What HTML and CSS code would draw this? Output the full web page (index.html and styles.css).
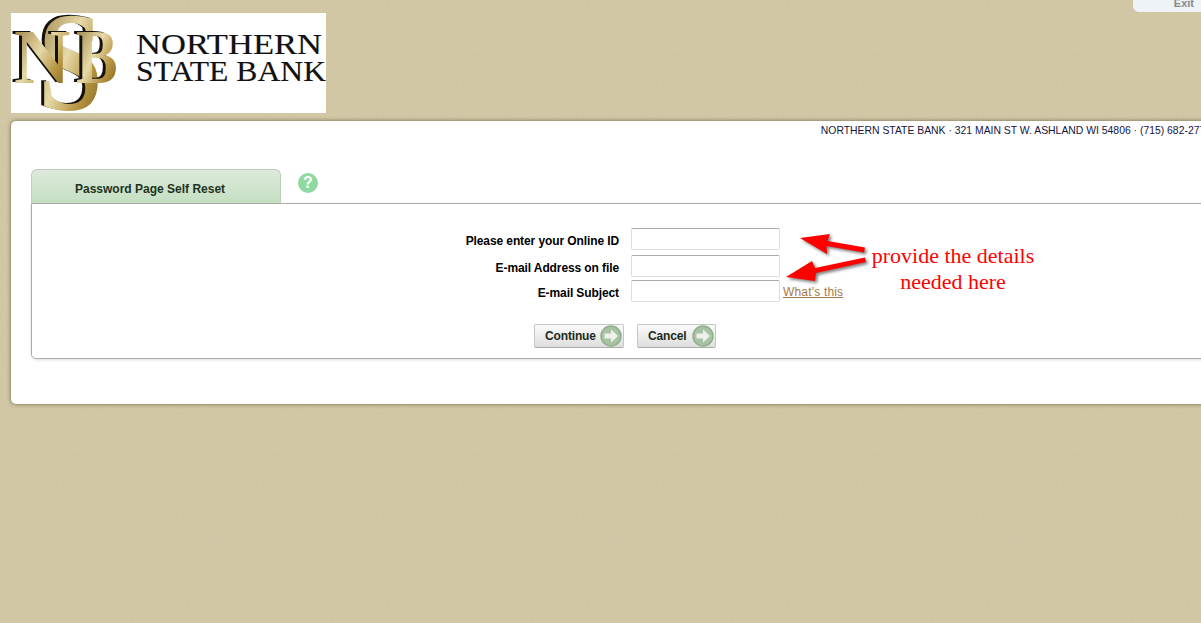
FILE: index.html
```html
<!DOCTYPE html>
<html lang="en">
<head>
    <meta charset="UTF-8">
    <title>Password Page Self Reset</title>
    <link rel="stylesheet" href="styles.css">
</head>
<body>

<!-- Header -->
<div class="header">
    <svg class="logo" width="315" height="100" viewBox="0 0 315 100">
        <defs>
            <linearGradient id="gold" x1="0" y1="0" x2="1" y2="1">
                <stop offset="0" stop-color="#8a6d2c"/>
                <stop offset="0.45" stop-color="#e6d9a8"/>
                <stop offset="0.7" stop-color="#b4923f"/>
                <stop offset="1" stop-color="#6e5418"/>
            </linearGradient>
        </defs>
        <rect width="315" height="100" fill="#fff"/>
        <g class="mono">
            <text class="mono-back" transform="translate(24,96) scale(0.82,1)" font-size="142">S</text>
            <text class="mono-gold" transform="translate(27,97) scale(0.82,1)" font-size="142">S</text>
            <text class="mono-back" transform="translate(0,69)" font-size="78">N</text>
            <text class="mono-gold" transform="translate(3,70)" font-size="78">N</text>
            <text class="mono-back" transform="translate(62,69) scale(0.8,1)" font-size="78">B</text>
            <text class="mono-gold" transform="translate(65,70) scale(0.8,1)" font-size="78">B</text>
        </g>
        <text class="wordmark" x="125" y="41" textLength="186" lengthAdjust="spacingAndGlyphs">NORTHERN</text>
        <text class="wordmark" x="125" y="68" textLength="190" lengthAdjust="spacingAndGlyphs">STATE BANK</text>
    </svg>
    <div class="exit-tab">Exit</div>
</div>

<!-- Main card -->
<div class="card">
    <p class="address">NORTHERN STATE BANK · 321 MAIN ST W. ASHLAND WI 54806 · (715) 682-2772</p>

    <div class="tabs">
        <div class="tab">Password Page Self Reset</div>
        <div class="help">?</div>
    </div>

    <div class="panel">
        <form class="reset-form">
            <label class="row-first">Please enter your Online ID</label>
            <input class="row-first" type="text">
            <span class="row-first"></span>

            <label class="row-second">E-mail Address on file</label>
            <input class="row-second" type="text">
            <span class="row-second"></span>

            <label>E-mail Subject</label>
            <input type="text">
            <a class="whats-this" href="#">What's this</a>
        </form>

        <div class="buttons">
            <button type="button" class="btn btn-continue">Continue
                <svg class="go" width="22" height="22" viewBox="0 0 22 22">
                    <circle cx="11" cy="11" r="10" fill="#a8c3a4" stroke="#8fae8b" stroke-width="1.5"/>
                    <path d="M4.5 8.5h6.5V4.5L18 11l-7 6.500v-4H4.500z" fill="#eef2ea"/>
                </svg>
            </button>
            <button type="button" class="btn btn-cancel">Cancel
                <svg class="go" width="22" height="22" viewBox="0 0 22 22">
                    <circle cx="11" cy="11" r="10" fill="#a8c3a4" stroke="#8fae8b" stroke-width="1.5"/>
                    <path d="M4.5 8.5h6.500V4.500L18 11l-7 6.500v-4H4.500z" fill="#eef2ea"/>
                </svg>
            </button>
        </div>
    </div>
</div>

<!-- Red note drawn over the page -->
<svg class="arrows" width="90" height="60" viewBox="0 0 90 60">
    <path d="M15 9L45 5l-2.500 7L80 18.500 79 23.500 41.500 17 42 25z" fill="#f00"/>
    <path d="M1 48L27 32l3 7L80 28.500l1 4.500L31 44l-1 8z" fill="#f00"/>
</svg>
<div class="note">provide the details<br>needed here</div>

</body>
</html>
```

FILE: styles.css
```css
html, body {
    height: 100%;
}

body {
    margin: 0;
    overflow: hidden;
    position: relative;
    background-color: #d7ccaa;
    background-image: url("data:image/svg+xml,%3Csvg xmlns='http://www.w3.org/2000/svg' width='200' height='200'%3E%3Cfilter id='n'%3E%3CfeTurbulence type='fractalNoise' baseFrequency='0.8' numOctaves='2' stitchTiles='stitch'/%3E%3CfeColorMatrix values='0 0 0 0 0.45 0 0 0 0 0.4 0 0 0 0 0.25 0 0 0 0.3 0'/%3E%3C/filter%3E%3Crect width='200' height='200' filter='url(%23n)'/%3E%3C/svg%3E");
    font-family: "Liberation Sans", Arial, sans-serif;
    color: #000;
}

.header {
    display: flex;
    justify-content: space-between;
    align-items: flex-start;
    height: 121px;
}

.logo {
    display: block;
    margin: 13px 0 0 11px;
}

.mono text {
    font-family: "Liberation Serif", serif;
    font-weight: bold;
}

.mono-back {
    fill: #14110a;
}

.mono-gold {
    fill: url(#gold);
}

.wordmark {
    font-family: "Liberation Serif", serif;
    font-size: 29px;
    fill: #111;
    stroke: #111;
    stroke-width: 0.15px;
}

.exit-tab {
    width: 68px;
    height: 12px;
    box-sizing: border-box;
    line-height: 6px;
    padding-right: 7px;
    text-align: right;
    font-size: 11px;
    font-weight: bold;
    color: #888;
    background: #edf3f6;
    border-radius: 0 0 0 6px;
    overflow: hidden;
}

.card {
    width: 1228px;
    height: 283px;
    box-sizing: border-box;
    margin-left: 11px;
    padding: 0 0 0 20px;
    background: #fff;
    border-radius: 5px;
    box-shadow: 0 0 4px #6b6448;
}

.address {
    margin: 0 28px 0 -20px;
    padding-top: 4px;
    text-align: right;
    font-size: 10.400px;
    line-height: 12px;
    color: #14143c;
}

.tabs {
    display: flex;
    align-items: flex-start;
    margin-top: 32px;
}

.tab {
    width: 250px;
    height: 34px;
    box-sizing: border-box;
    padding: 12px 0 0 43px;
    font-size: 12px;
    font-weight: bold;
    line-height: 14px;
    color: #1d3320;
    background: linear-gradient(#dde9db, #c5dfc2);
    border: 1px solid #bccdb9;
    border-bottom: none;
    border-radius: 6px 6px 0 0;
}

.help {
    width: 20px;
    height: 20px;
    margin: 4px 0 0 17px;
    border-radius: 50%;
    background: #8fd9a0;
    color: #fff;
    font-size: 16px;
    font-weight: bold;
    line-height: 20px;
    text-align: center;
}

.panel {
    height: 156px;
    box-sizing: border-box;
    padding-top: 24px;
    border: 1px solid #aaa;
    border-radius: 0 0 0 5px;
    box-shadow: 0 1px 3px #ddd;
}

.reset-form {
    display: grid;
    grid-template-columns: 587px 149px auto;
    column-gap: 12px;
    align-items: center;
}

.reset-form label {
    padding-top: 3px;
    text-align: right;
    font-size: 12px;
    font-weight: bold;
    letter-spacing: -0.1px;
}

.reset-form input {
    width: 149px;
    height: 22px;
    box-sizing: border-box;
    margin: 0;
    padding: 2px 4px;
    background: #fff;
    border: 1px solid #dcdce4;
    border-top-color: #aaa;
    border-radius: 2px;
}

.row-first {
    margin-bottom: 5px;
}

.row-second {
    margin-bottom: 3px;
}

.reset-form input.row-first {
    margin-bottom: 5px;
}

.reset-form input.row-second {
    margin-bottom: 3px;
}

.whats-this {
    margin-left: -9px;
    padding-top: 1px;
    font-size: 12px;
    letter-spacing: 0.18px;
    color: #a5794a;
}

.buttons {
    display: flex;
    gap: 13px;
    margin: 22px 0 0 502px;
}

.btn {
    display: flex;
    align-items: center;
    justify-content: space-between;
    height: 24px;
    box-sizing: border-box;
    padding: 0 1px 0 10px;
    font-family: "Liberation Sans", Arial, sans-serif;
    font-size: 12px;
    font-weight: bold;
    letter-spacing: -0.15px;
    color: #1c2c1c;
    background: linear-gradient(#fafafa, #dedede);
    border: 1px solid #c4c8c4;
    border-bottom-color: #a8aca8;
    border-radius: 2px;
}

.btn-continue {
    width: 90px;
}

.btn-cancel {
    width: 79px;
}

.arrows {
    position: absolute;
    left: 785px;
    top: 229px;
    filter: drop-shadow(2px 2px 1.500px rgba(0,0,0,0.5));
}

.note {
    position: absolute;
    left: 853px;
    top: 243px;
    width: 200px;
    text-align: center;
    font-family: "Liberation Serif", serif;
    font-size: 22px;
    line-height: 26px;
    color: #f00;
}
```
